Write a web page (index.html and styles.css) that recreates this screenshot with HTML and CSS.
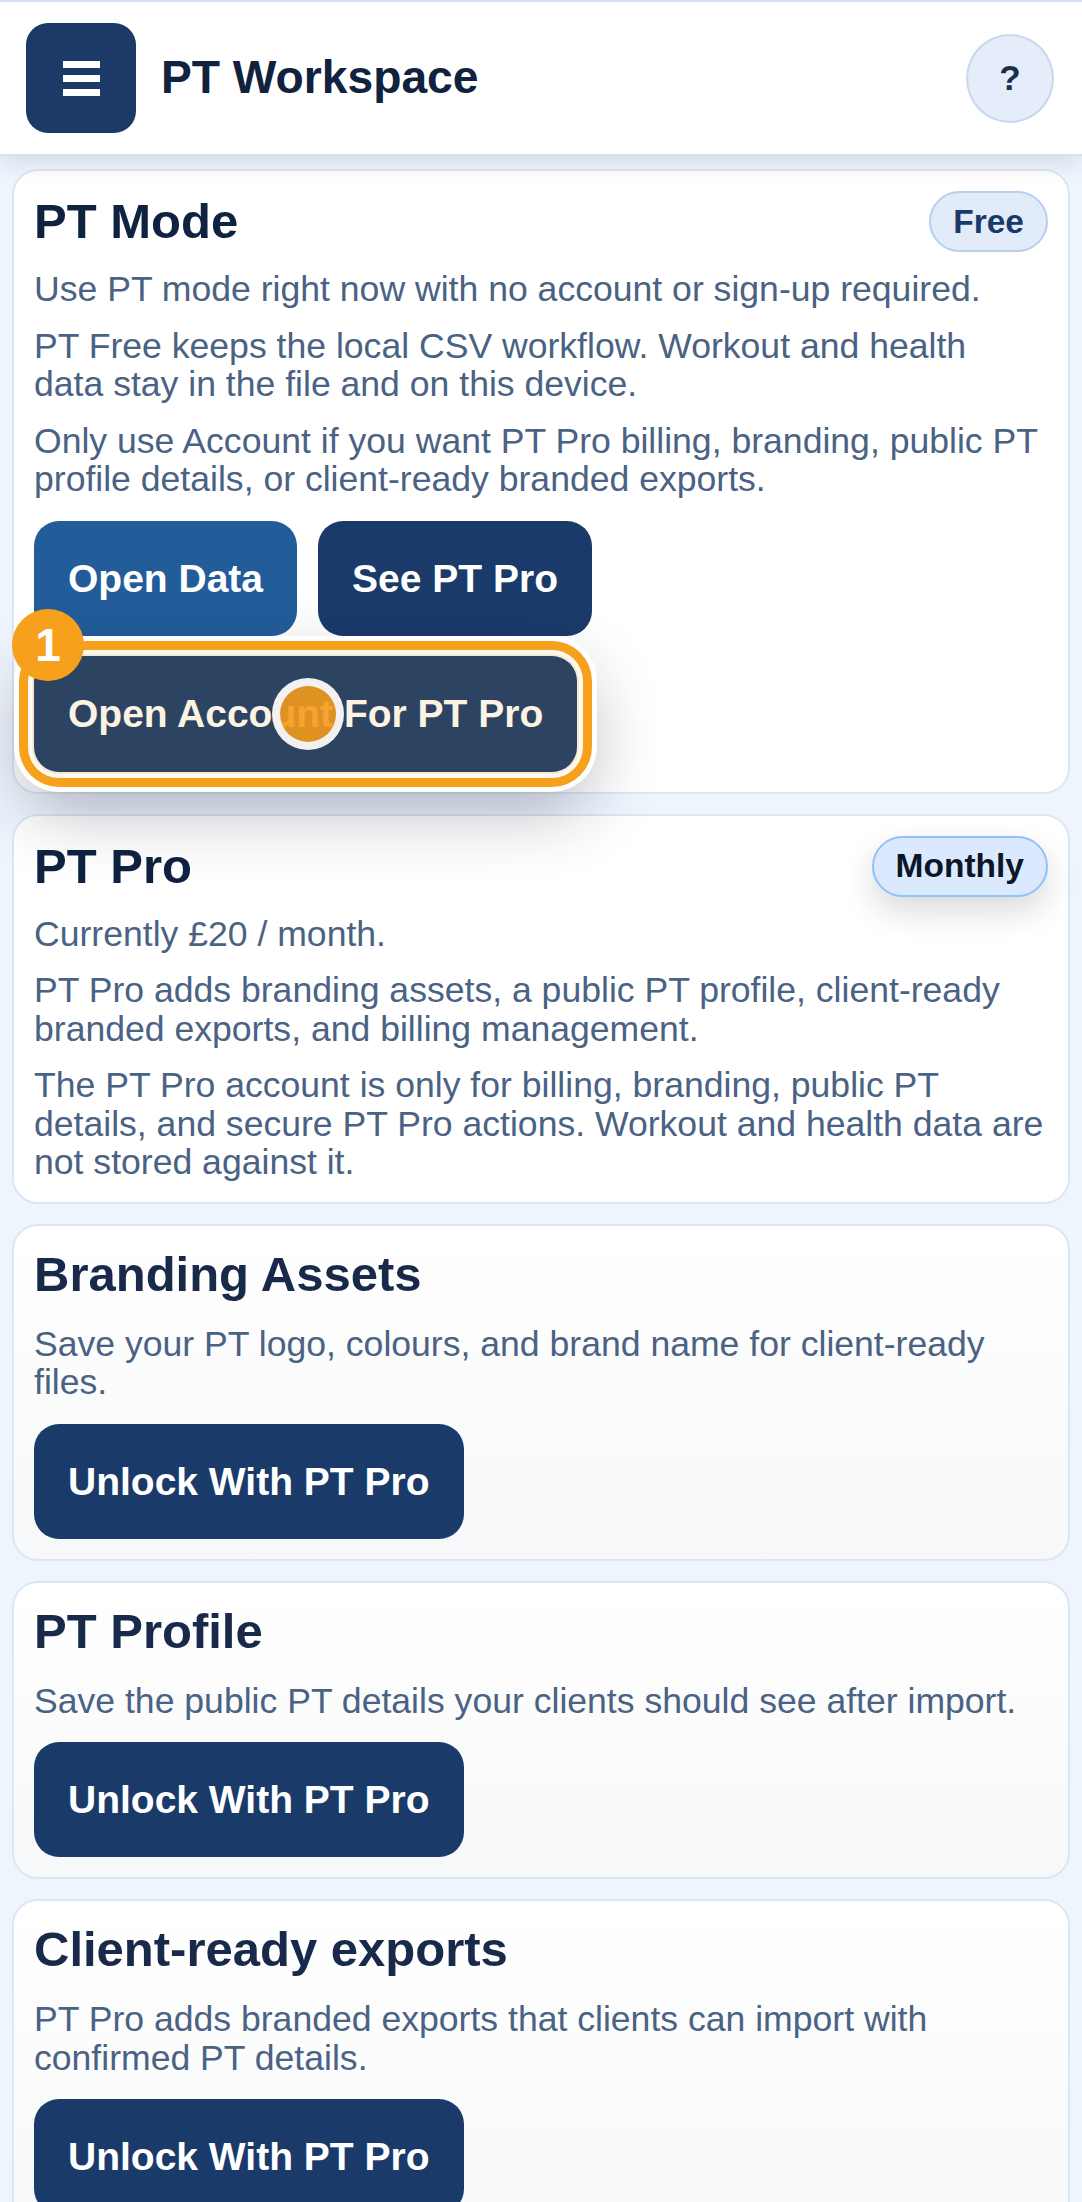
FILE: index.html
```html
<!DOCTYPE html>
<html lang="en">
<head>
<meta charset="utf-8">
<title>PT Workspace</title>
<link rel="stylesheet" href="styles.css">
</head>
<body>
<header class="topbar">
  <button class="menu-btn" aria-label="Menu"><span class="bars"><i></i><i></i><i></i></span></button>
  <h1 class="app-title">PT Workspace</h1>
  <button class="help-btn" aria-label="Help">?</button>
</header>
<main class="content">
  <section class="card">
    <div class="card-head">
      <h2 class="card-title">PT Mode</h2>
      <span class="pill pill-free">Free</span>
    </div>
    <p class="card-text">Use PT mode right now with no account or sign-up required.</p>
    <p class="card-text">PT Free keeps the local CSV workflow. Workout and health<br>data stay in the file and on this device.</p>
    <p class="card-text">Only use Account if you want PT Pro billing, branding, public PT profile details, or client-ready branded exports.</p>
    <div class="actions">
      <button class="btn btn-primary">Open Data</button>
      <button class="btn btn-dark">See PT Pro</button>
      <button class="btn btn-highlight">Open Account For PT Pro<span class="step-badge">1</span><span class="tap-dot"></span></button>
    </div>
  </section>

  <section class="card">
    <div class="card-head">
      <h2 class="card-title">PT Pro</h2>
      <span class="pill pill-monthly">Monthly</span>
    </div>
    <p class="card-text">Currently £20 / month.</p>
    <p class="card-text">PT Pro adds branding assets, a public PT profile, client-ready branded exports, and billing management.</p>
    <p class="card-text">The PT Pro account is only for billing, branding, public PT details, and secure PT Pro actions. Workout and health data are not stored against it.</p>
  </section>

  <section class="card card-locked">
    <div class="card-head">
      <h2 class="card-title">Branding Assets</h2>
    </div>
    <p class="card-text">Save your PT logo, colours, and brand name for client-ready files.</p>
    <div class="actions">
      <button class="btn btn-dark">Unlock With PT Pro</button>
    </div>
  </section>

  <section class="card card-locked">
    <div class="card-head">
      <h2 class="card-title">PT Profile</h2>
    </div>
    <p class="card-text">Save the public PT details your clients should see after import.</p>
    <div class="actions">
      <button class="btn btn-dark">Unlock With PT Pro</button>
    </div>
  </section>

  <section class="card card-locked">
    <div class="card-head">
      <h2 class="card-title">Client-ready exports</h2>
    </div>
    <p class="card-text">PT Pro adds branded exports that clients can import with confirmed PT details.</p>
    <div class="actions">
      <button class="btn btn-dark">Unlock With PT Pro</button>
    </div>
  </section>
</main>
</body>
</html>
```

FILE: styles.css
```css
* {
  box-sizing: border-box;
}

html, body {
  margin: 0;
  padding: 0;
}

body {
  background: #eff5fd;
  font-family: "Liberation Sans", Arial, "Helvetica Neue", sans-serif;
  color: #0f2340;
}

button {
  font-family: inherit;
  cursor: pointer;
}

/* Header */
.topbar {
  position: relative;
  z-index: 2;
  display: flex;
  align-items: center;
  gap: 25px;
  background: #ffffff;
  border-top: 2px solid #d6e2f1;
  border-bottom: 2px solid #d6e2f1;
  padding: 21px 28px 21px 26px;
  box-shadow: 0 6px 22px rgba(15, 35, 70, 0.13);
}

.menu-btn {
  width: 110px;
  height: 110px;
  border: none;
  border-radius: 22px;
  background: #1b3a68;
  display: flex;
  align-items: center;
  justify-content: center;
  padding: 0;
  flex-shrink: 0;
}

.bars {
  display: flex;
  flex-direction: column;
  gap: 7px;
}

.bars i {
  display: block;
  width: 37px;
  height: 7px;
  background: #ffffff;
}

.app-title {
  flex: 1;
  margin: 0;
  font-size: 46.2px;
  font-weight: 700;
  color: #10223d;
  line-height: 1.2;
}

.help-btn {
  width: 88px;
  height: 89px;
  border-radius: 50%;
  background: #e4edf9;
  border: 2px solid #c9d8ee;
  color: #1b2f4d;
  font-size: 35px;
  font-weight: 700;
  padding: 0;
  flex-shrink: 0;
}

/* Content */
.content {
  display: flex;
  flex-direction: column;
  gap: 20px;
  padding: 13px 12px 40px;
}

.card {
  background: #ffffff;
  border: 2px solid #dce7f4;
  border-radius: 26px;
  padding: 20px;
  display: flex;
  flex-direction: column;
  gap: 18px;
}

.card-locked {
  background: linear-gradient(180deg, #ffffff 0%, #f7f8f9 100%);
}

.card-head {
  display: flex;
  align-items: center;
  justify-content: space-between;
  gap: 16px;
  min-height: 61px;
}

.card-locked .card-head {
  min-height: 0;
  margin-bottom: 5px;
}

.card-title {
  margin: 0;
  font-size: 49px;
  font-weight: 700;
  line-height: 61px;
  color: #0f2340;
}

.card-locked .card-title {
  color: #18294a;
  line-height: 56px;
}

.card-text {
  margin: 0;
  font-size: 35.6px;
  line-height: 38.5px;
  color: #4a6283;
}

.pill {
  display: inline-block;
  font-size: 33.5px;
  font-weight: 700;
  line-height: 40px;
  padding: 8.5px 22px;
  border-radius: 999px;
  border: 2px solid;
  flex-shrink: 0;
}

.pill-free {
  background: #e2ebf8;
  border-color: #b8cfee;
  color: #1a3a6b;
}

.pill-monthly {
  background: #dbe9fe;
  border-color: #93c0f6;
  color: #0b1628;
  box-shadow: 0 14px 32px rgba(15, 23, 42, 0.16);
}

/* Buttons */
.actions {
  display: flex;
  flex-wrap: wrap;
  gap: 20px 21px;
  margin-top: 4px;
}

.btn {
  border: none;
  border-radius: 25px;
  font-size: 39px;
  font-weight: 700;
  line-height: 45px;
  padding: 35px 34px;
  color: #ffffff;
  white-space: nowrap;
}

.btn-primary {
  background: #225d99;
}

.btn-dark {
  background: #1a3a6a;
}

.btn-highlight {
  position: relative;
  z-index: 5;
  background: #2c4462;
  color: #fdf3e2;
  padding: 35.5px 34px;
  box-shadow:
    0 0 0 2px #f4e9d8,
    0 0 0 6px #fff8ee,
    0 0 0 15px #f7a01c,
    0 0 0 20px rgba(255, 255, 255, 0.95),
    0 26px 70px 10px rgba(15, 23, 42, 0.32);
}

.step-badge {
  position: absolute;
  left: -22px;
  top: -47px;
  width: 72px;
  height: 72px;
  border-radius: 50%;
  background: #f7a01c;
  color: #ffffff;
  font-size: 46px;
  line-height: 72px;
  text-align: center;
  font-weight: 700;
}

.tap-dot {
  position: absolute;
  left: 238px;
  top: 22px;
  width: 72px;
  height: 72px;
  border-radius: 50%;
  border: 8px solid rgba(243, 245, 248, 0.97);
  background: rgba(243, 155, 28, 0.9);
}
```
